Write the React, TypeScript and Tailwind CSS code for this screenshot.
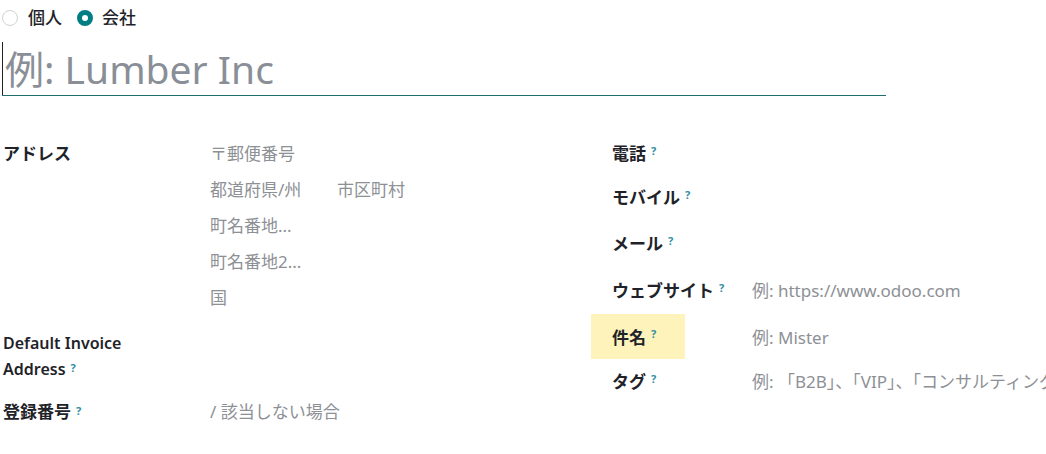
const Help = () => (
  <sup className="relative -top-[3px] ml-[5px] text-[11px] font-bold text-[#2f8ea3]">?</sup>
);

const leftAddress = [
  ["〒郵便番号"],
  ["都道府県/州", "市区町村"],
  ["町名番地..."],
  ["町名番地2..."],
  ["国"],
];

const rightRows = [
  { label: "電話", value: "", h: "h-[44px]" },
  { label: "モバイル", value: "", h: "h-[44px]" },
  { label: "メール", value: "", h: "h-[48px]" },
  { label: "ウェブサイト", value: "例: https://www.odoo.com", h: "h-[46px]" },
  { label: "件名", value: "例: Mister", h: "h-[45px]", hl: true },
  { label: "タグ", value: "例: 「B2B」、「VIP」、「コンサルティング」", h: "h-[46px]" },
];

export default function App() {
  return (
    <div
      className="w-[1046px] h-[454px] overflow-hidden bg-white text-[#1f2329]"
      style={{ fontFamily: '"Noto Sans", "Noto Sans CJK JP", sans-serif' }}
    >
      {/* company type */}
      <div className="flex items-center h-[20px] mt-[8px] text-[17px] font-medium">
        <span className="ml-[2px] w-[16px] h-[16px] rounded-full border border-[#cfd2d4] bg-white" />
        <span className="ml-[10px]">個人</span>
        <span className="ml-[15px] w-[16px] h-[16px] rounded-full border-[5px] border-[#017e84] bg-white" />
        <span className="ml-[9px]">会社</span>
      </div>

      {/* name */}
      <div className="ml-[2px] mt-[14px] w-[884px] h-[54px] border-b border-[#1f6f6e] flex items-center">
        <span className="w-px h-[53px] bg-[#222]" />
        <span className="ml-[2px] text-[39px] leading-none text-[#8a8f97]">例: Lumber Inc</span>
      </div>

      <div className="flex mt-[40px]">
        {/* left column */}
        <div className="w-[591px] shrink-0 text-[17px]">
          {leftAddress.map((vals, i) => (
            <div key={i} className="flex items-center h-[36px]">
              <div className="w-[210px] pl-[3px] font-semibold">{i === 0 ? "アドレス" : ""}</div>
              <div className="flex text-[#8d9095]">
                <span className="w-[127px]">{vals[0]}</span>
                {vals[1] && <span>{vals[1]}</span>}
              </div>
            </div>
          ))}
          <div className="mt-[14px] pl-[3px] text-[16px] font-semibold leading-[26px]">
            Default Invoice
            <br />
            Address
            <Help />
          </div>
          <div className="flex items-center h-[36px] mt-[12px]">
            <div className="w-[210px] pl-[3px] font-semibold">
              登録番号
              <Help />
            </div>
            <div className="text-[#8d9095]">/ 該当しない場合</div>
          </div>
        </div>

        {/* right column */}
        <div className="flex-1 min-w-0 -mt-[4px] text-[17px]">
          {rightRows.map((r) => (
            <div key={r.label} className={`flex items-center ${r.h}`}>
              <div className="w-[161px] shrink-0 h-full flex items-center">
                <div className={`h-full flex items-center pl-[21px] font-semibold ${r.hl ? "w-[94px] bg-[#fdf3bb]" : ""}`}>
                  <span className={r.hl ? "mt-[3px]" : ""}>{r.label}</span>
                  <Help />
                </div>
              </div>
              <div className={`whitespace-nowrap text-[#8d9095] ${r.hl ? "mt-[3px]" : ""}`}>{r.value}</div>
            </div>
          ))}
        </div>
      </div>
    </div>
  );
}
